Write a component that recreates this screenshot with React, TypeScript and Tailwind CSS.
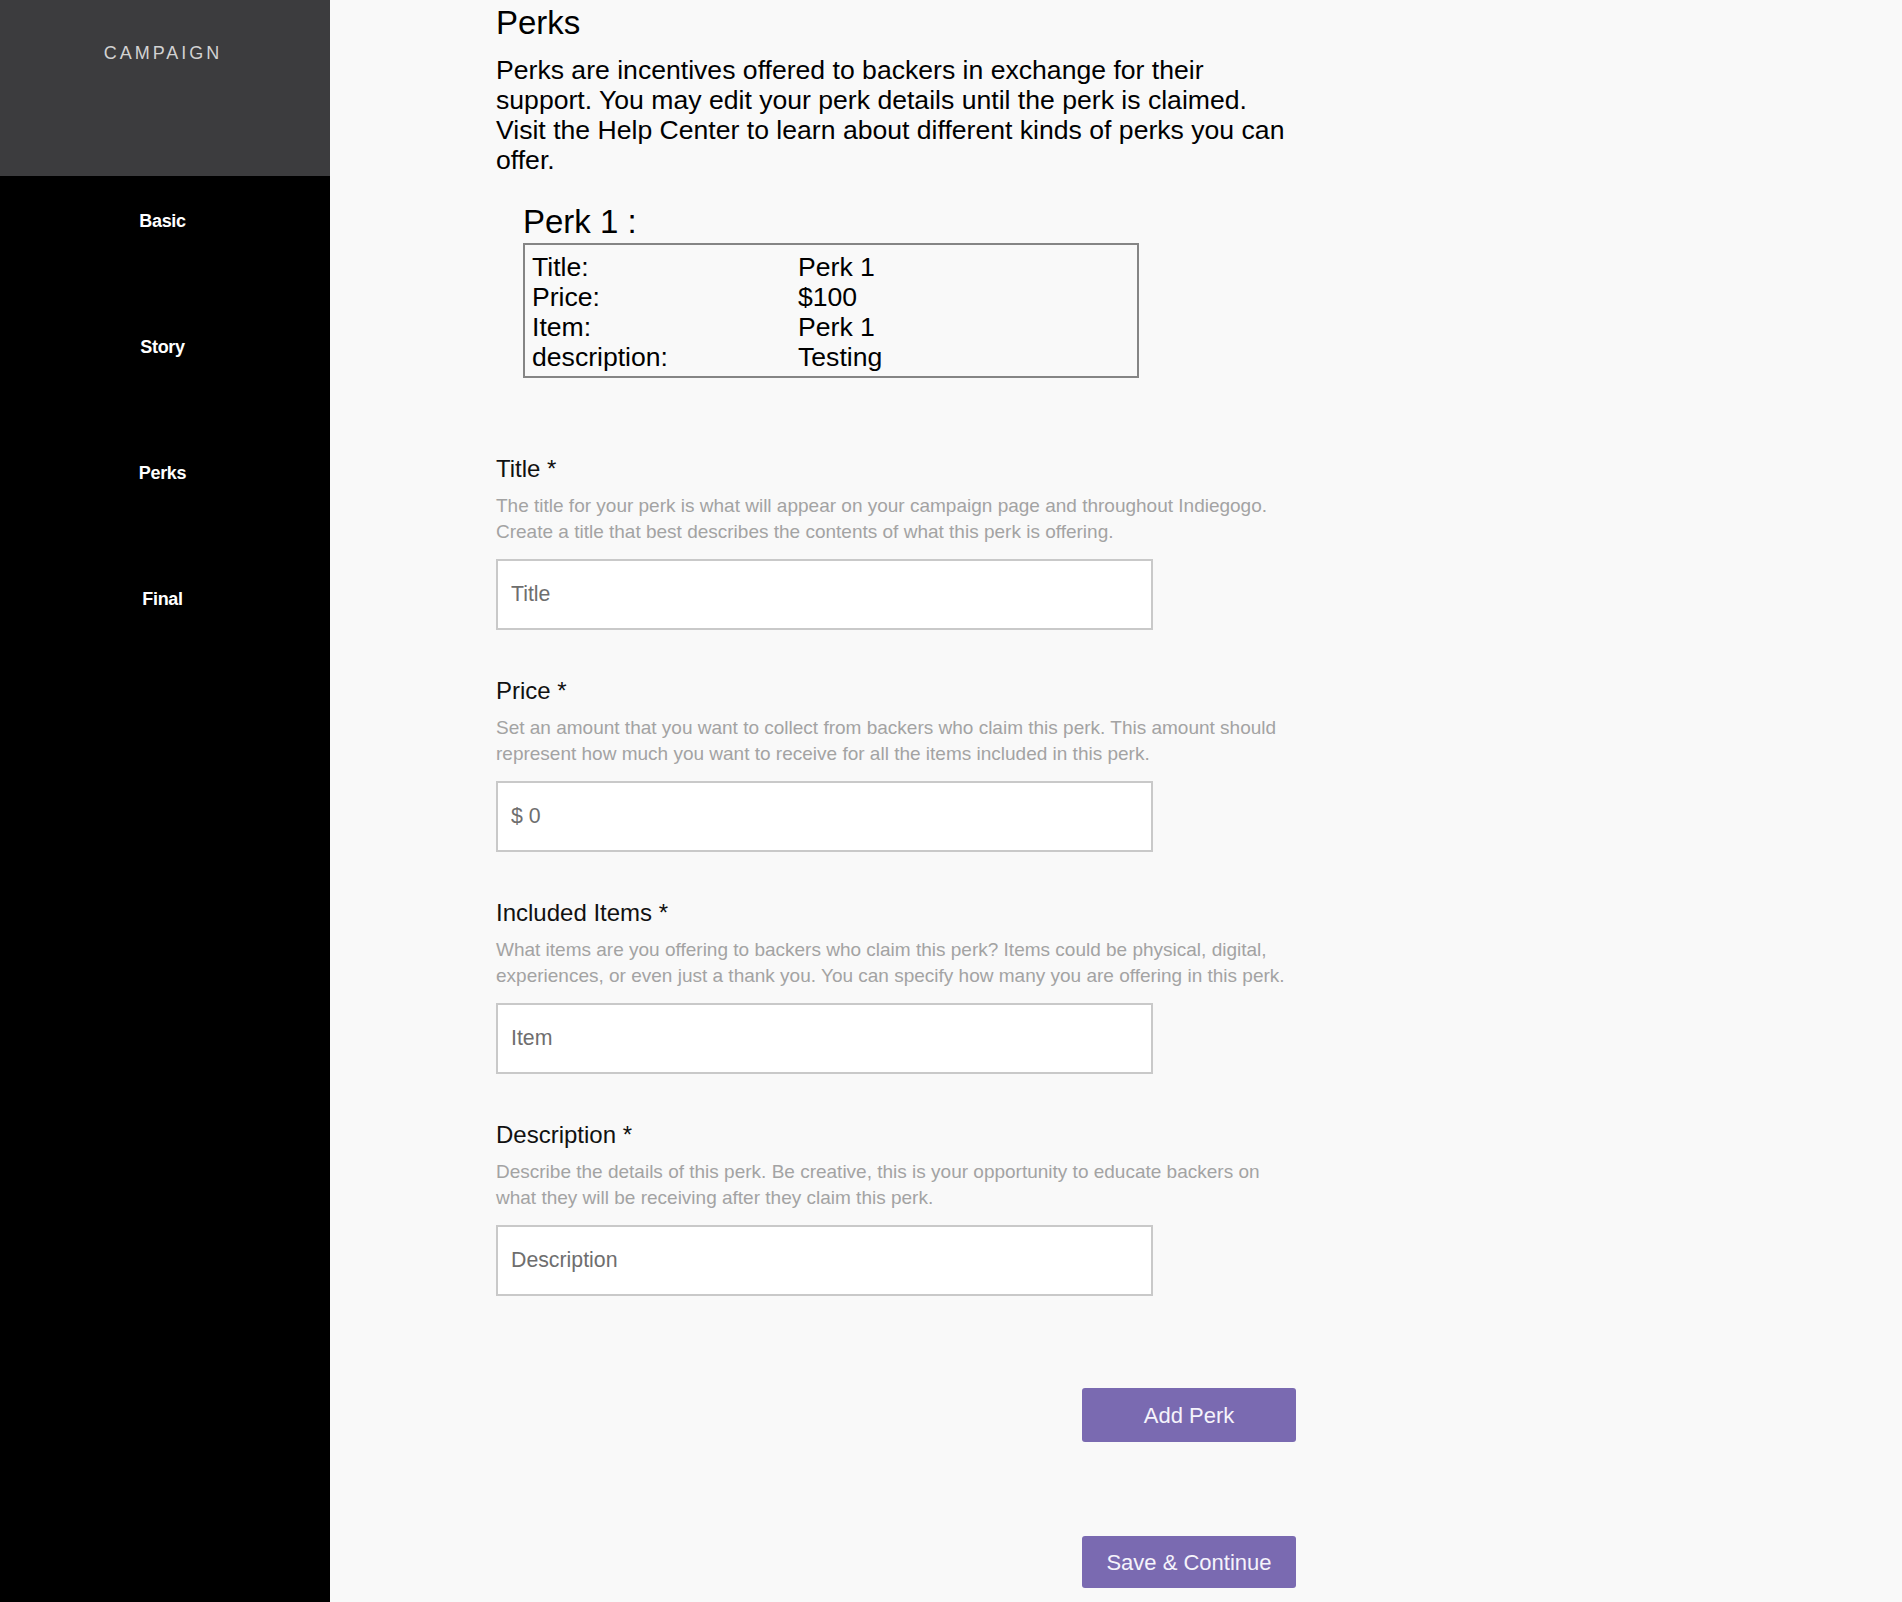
import { useState } from "react";

const navItems = ["Basic", "Story", "Perks", "Final"];

const fields = [
  {
    label: "Title *",
    help: [
      "The title for your perk is what will appear on your campaign page and throughout Indiegogo.",
      "Create a title that best describes the contents of what this perk is offering.",
    ],
    placeholder: "Title",
  },
  {
    label: "Price *",
    help: [
      "Set an amount that you want to collect from backers who claim this perk. This amount should",
      "represent how much you want to receive for all the items included in this perk.",
    ],
    placeholder: "$ 0",
  },
  {
    label: "Included Items *",
    help: [
      "What items are you offering to backers who claim this perk? Items could be physical, digital,",
      "experiences, or even just a thank you. You can specify how many you are offering in this perk.",
    ],
    placeholder: "Item",
  },
  {
    label: "Description *",
    help: [
      "Describe the details of this perk. Be creative, this is your opportunity to educate backers on",
      "what they will be receiving after they claim this perk.",
    ],
    placeholder: "Description",
  },
];

const perk = [
  ["Title:", "Perk 1"],
  ["Price:", "$100"],
  ["Item:", "Perk 1"],
  ["description:", "Testing"],
];

export default function App() {
  const [active] = useState("Perks");

  return (
    <div className="flex min-h-screen bg-[#f9f9f9] font-['Liberation_Sans',Arial,sans-serif]">
      {/* Sidebar */}
      <aside className="w-[330px] shrink-0 bg-black">
        <div className="h-[176px] bg-[#3c3c3e] pr-[4px] pt-[41px] text-center">
          <span className="text-[18px] font-medium leading-6 tracking-[3px] text-[#d2d2d2]">CAMPAIGN</span>
        </div>
        <nav className="flex flex-col gap-[98px] pr-[5px] pt-[31px]">
          {navItems.map((item) => (
            <a
              key={item}
              href="#"
              className={`text-center text-[18px] font-bold leading-7 tracking-[-0.3px] text-white ${
                active === item ? "opacity-100" : "opacity-100"
              }`}
            >
              {item}
            </a>
          ))}
        </nav>
      </aside>

      {/* Main */}
      <main className="ml-[166px] w-[800px] pb-[14px] pt-[5px] text-black">
        <h1 className="text-[33px] leading-9">Perks</h1>
        <p className="mt-[14px] text-[26.6px] leading-[30px]">
          Perks are incentives offered to backers in exchange for their
          <br />
          support. You may edit your perk details until the perk is claimed.
          <br />
          Visit the Help Center to learn about different kinds of perks you can
          <br />
          offer.
        </p>

        {/* Existing perk */}
        <div className="ml-[27px] mt-[29px] w-[616px]">
          <h2 className="text-[33px] leading-9">Perk 1 :</h2>
          <div className="mt-[3px] border-2 border-[#858585] pb-[4px] pl-[7px] pt-[7px]">
            {perk.map(([k, v]) => (
              <div key={k} className="grid grid-cols-[266px_1fr] text-[26.6px] leading-[30px]">
                <span>{k}</span>
                <span>{v}</span>
              </div>
            ))}
          </div>
        </div>

        {/* Form */}
        <form className="mt-[77px] flex flex-col gap-[47px]" onSubmit={(e) => e.preventDefault()}>
          {fields.map((f) => (
            <div key={f.label}>
              <label className="block text-[24px] leading-7 text-[#111]">{f.label}</label>
              <p className="mt-[10px] text-[19px] leading-[26px] text-[#a3a3a3]">
                {f.help.map((line) => (
                  <span key={line} className="block whitespace-nowrap">
                    {line}
                  </span>
                ))}
              </p>
              <input
                type="text"
                placeholder={f.placeholder}
                className="mt-[14px] h-[71px] w-[657px] border-2 border-[#c9c9c9] bg-white px-[13px] text-[21.3px] text-[#333] outline-none placeholder:text-[#6e6e6e]"
              />
            </div>
          ))}
        </form>

        <div className="mt-[92px] flex flex-col items-end gap-[94px]">
          <button className="h-[54px] w-[214px] rounded-[3px] bg-[#7a6ab1] text-[22px] font-medium text-[#f5f3fb]">
            Add Perk
          </button>
          <button className="h-[52px] w-[214px] rounded-[3px] bg-[#7a6ab1] text-[22px] font-medium text-[#f5f3fb]">
            Save &amp; Continue
          </button>
        </div>
      </main>
    </div>
  );
}
